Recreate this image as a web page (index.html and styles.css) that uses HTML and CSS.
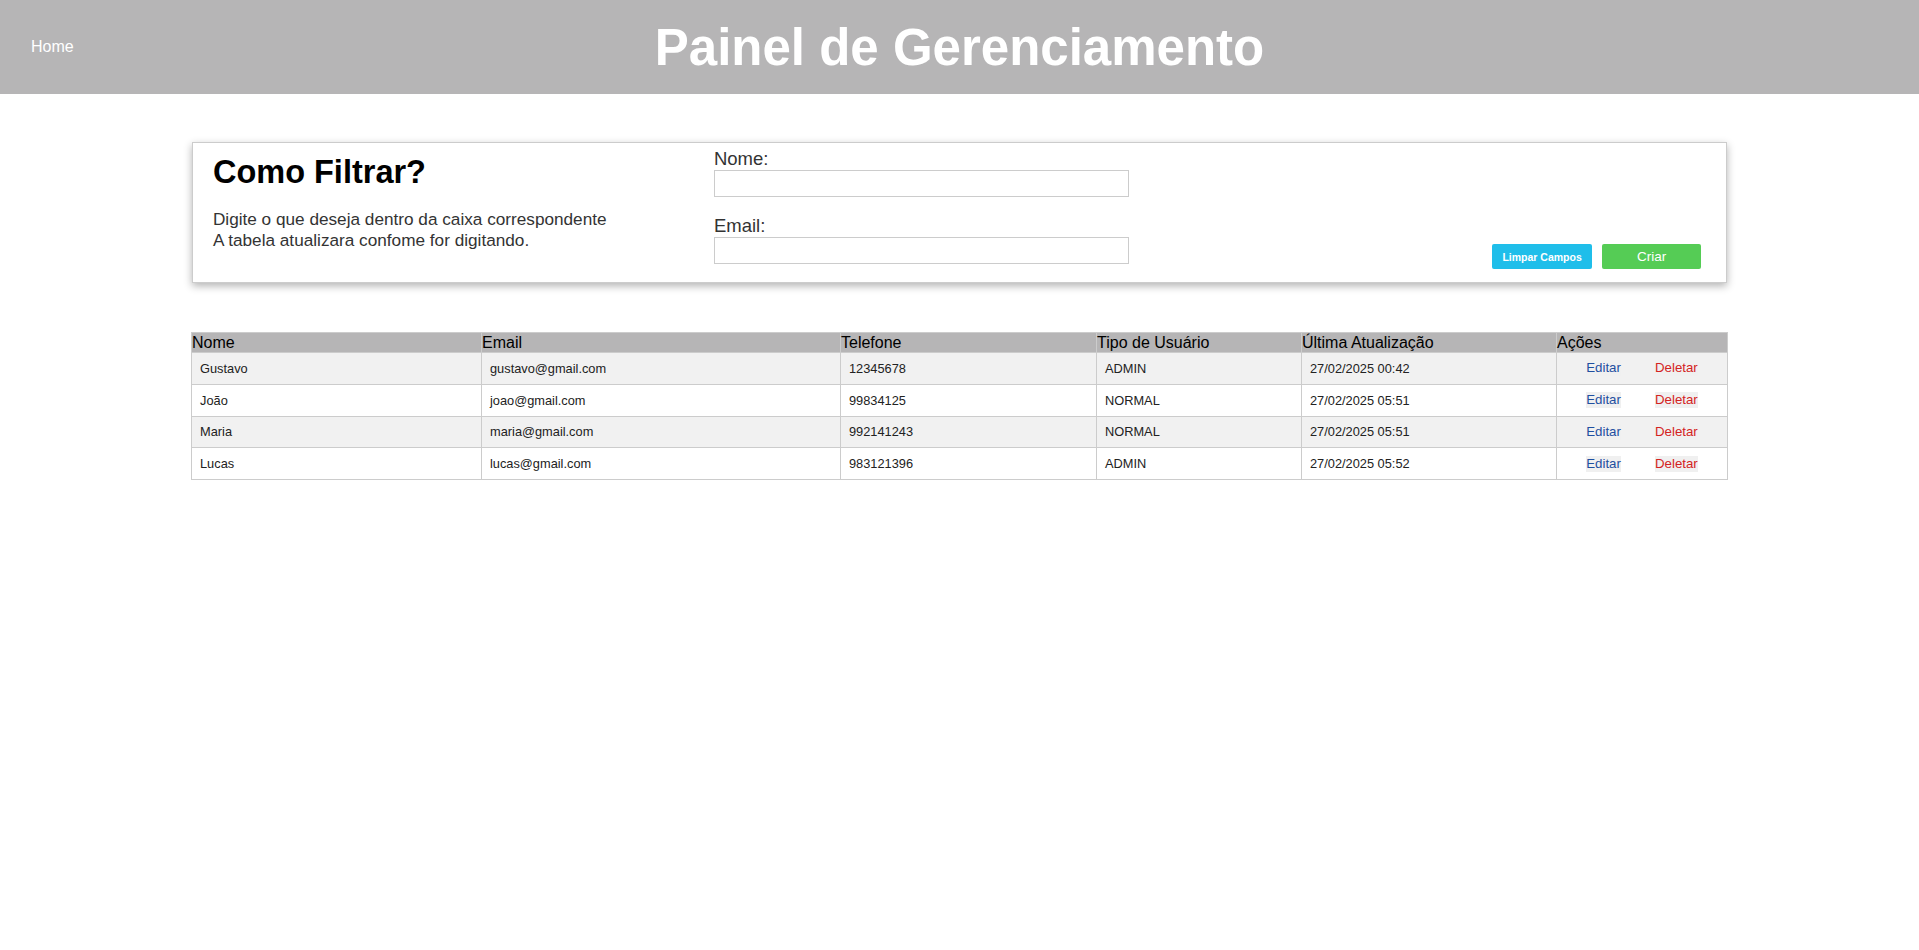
FILE: index.html
```html
<!DOCTYPE html>
<html lang="pt-BR">
<head>
<meta charset="utf-8">
<title>Painel de Gerenciamento</title>
<link rel="stylesheet" href="styles.css">
</head>
<body>
<header class="topbar">
  <nav class="topbar-nav"><a class="home-link" href="#">Home</a></nav>
  <h1 class="topbar-title">Painel de Gerenciamento</h1>
  <div class="topbar-spacer"></div>
</header>

<section class="filter-card">
  <div class="filter-intro">
    <h2 class="filter-heading">Como Filtrar?</h2>
    <p class="filter-help">Digite o que deseja dentro da caixa correspondente<br>A tabela atualizara confome for digitando.</p>
  </div>
  <div class="filter-fields">
    <label class="field-label" for="nome">Nome:</label>
    <input class="field-input" id="nome" type="text">
    <label class="field-label field-label-second" for="email">Email:</label>
    <input class="field-input" id="email" type="text">
  </div>
  <div class="filter-actions">
    <button class="btn btn-clear" type="button">Limpar Campos</button>
    <button class="btn btn-create" type="button">Criar</button>
  </div>
</section>

<table class="users-table">
  <thead>
    <tr>
      <th class="col-nome">Nome</th>
      <th class="col-email">Email</th>
      <th class="col-tel">Telefone</th>
      <th class="col-tipo">Tipo de Usuário</th>
      <th class="col-data">Última Atualização</th>
      <th class="col-acoes">Ações</th>
    </tr>
  </thead>
  <tbody>
    <tr>
      <td>Gustavo</td><td>gustavo@gmail.com</td><td>12345678</td><td>ADMIN</td><td>27/02/2025 00:42</td>
      <td><div class="row-actions"><button class="link-btn link-edit" type="button">Editar</button><button class="link-btn link-delete" type="button">Deletar</button></div></td>
    </tr>
    <tr>
      <td>João</td><td>joao@gmail.com</td><td>99834125</td><td>NORMAL</td><td>27/02/2025 05:51</td>
      <td><div class="row-actions"><button class="link-btn link-edit" type="button">Editar</button><button class="link-btn link-delete" type="button">Deletar</button></div></td>
    </tr>
    <tr>
      <td>Maria</td><td>maria@gmail.com</td><td>992141243</td><td>NORMAL</td><td>27/02/2025 05:51</td>
      <td><div class="row-actions"><button class="link-btn link-edit" type="button">Editar</button><button class="link-btn link-delete" type="button">Deletar</button></div></td>
    </tr>
    <tr>
      <td>Lucas</td><td>lucas@gmail.com</td><td>983121396</td><td>ADMIN</td><td>27/02/2025 05:52</td>
      <td><div class="row-actions"><button class="link-btn link-edit" type="button">Editar</button><button class="link-btn link-delete" type="button">Deletar</button></div></td>
    </tr>
  </tbody>
</table>
</body>
</html>
```
FILE: styles.css
```css
* { box-sizing: border-box; }

body {
  margin: 0;
  font-family: "Liberation Sans", Arial, sans-serif;
  background: #ffffff;
  color: #000;
}

/* Header */
.topbar {
  height: 94px;
  background: #b6b5b6;
  display: grid;
  grid-template-columns: 1fr auto 1fr;
  align-items: center;
}
.topbar-nav { padding-left: 31px; }
.home-link {
  color: #ffffff;
  text-decoration: none;
  font-size: 16px;
}
.topbar-title {
  margin: 0 0 -1px;
  color: #ffffff;
  font-size: 51px;
  font-weight: bold;
  line-height: 56px;
}

/* Filter card */
.filter-card {
  width: 80%;
  margin: 48px auto 0;
  border: 1px solid #cccccc;
  box-shadow: 0 3px 8px rgba(0, 0, 0, 0.3);
  display: flex;
  background: #fff;
}
.filter-intro {
  width: 521px;
  padding-left: 20px;
}
.filter-heading {
  margin: 11px 0 0;
  font-size: 32.5px;
  line-height: 36px;
  font-weight: bold;
  color: #000;
}
.filter-help {
  margin: 19px 0 0;
  font-size: 17.2px;
  line-height: 21px;
  color: #333;
}
.filter-fields {
  width: 415px;
  display: flex;
  flex-direction: column;
  padding: 5px 0 18px;
}
.field-label {
  font-size: 18.5px;
  line-height: 21px;
  color: #333;
}
.field-label-second { margin-top: 18px; }
.field-input {
  margin-top: 1px;
  width: 415px;
  height: 27px;
  border: 1px solid #cccccc;
  border-radius: 0;
  padding: 0 6px;
  font-family: inherit;
  font-size: 14px;
  outline: none;
}
.filter-actions {
  flex: 1;
  display: flex;
  justify-content: flex-end;
  align-items: flex-end;
  gap: 10px;
  padding: 0 25px 13px 0;
}
.btn {
  height: 25px;
  border: none;
  border-radius: 2px;
  color: #ffffff;
  font-family: inherit;
  padding: 0;
}
.btn-clear {
  width: 100px;
  background: #1fbeea;
  font-size: 10.5px;
  font-weight: bold;
}
.btn-create {
  width: 99px;
  background: #55cc55;
  font-size: 13.5px;
}

/* Table */
.users-table {
  width: 80%;
  margin: 49px auto 0;
  border-collapse: collapse;
  table-layout: fixed;
}
.users-table th {
  background: #b6b5b6;
  border: 1px solid #cccccc;
  text-align: left;
  font-weight: normal;
  font-size: 16px;
  line-height: 18px;
  height: 20px;
  padding: 0;
  color: #000;
}
.col-nome { width: 290px; }
.col-email { width: 359px; }
.col-tel { width: 256px; }
.col-tipo { width: 205px; }
.col-data { width: 255px; }
.col-acoes { width: 171px; }

.users-table td {
  border: 1px solid #cccccc;
  height: 31.75px;
  padding: 0 8px;
  font-size: 12.8px;
  color: #222;
}
.users-table tbody tr:nth-child(odd) td { background: #f1f1f1; }
.users-table tbody tr:nth-child(even) td { background: #ffffff; }

.row-actions {
  display: flex;
  justify-content: center;
  gap: 34px;
}
.link-btn {
  border: none;
  padding: 0;
  background: #f0f0f0;
  font-family: inherit;
  font-size: 13.3px;
  line-height: 16px;
  cursor: pointer;
}
.link-edit { color: #1f4fa0; }
.link-delete { color: #d42222; }
```
